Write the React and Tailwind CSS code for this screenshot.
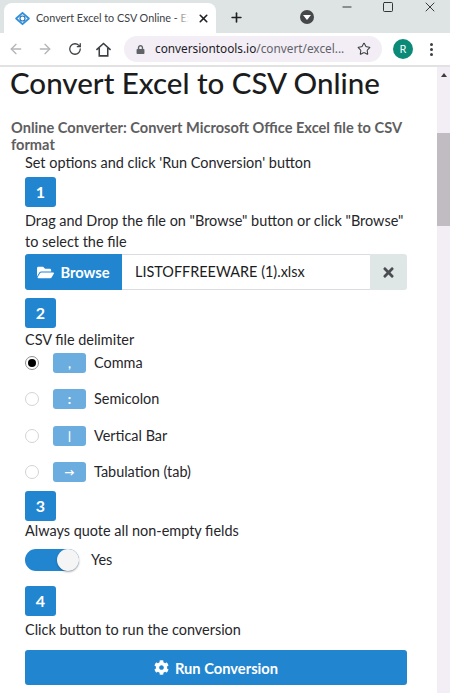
import { ArrowLeft, ArrowRight, RotateCw, Star, Plus, X, Minus, Square } from "lucide-react";
import { FaFolderOpen, FaTimes, FaCog, FaLock } from "react-icons/fa";

function StepBadge({ n, className = "" }) {
  return (
    <div className={`w-[31px] h-[30px] rounded-[3px] bg-[#2185d0] text-white font-bold text-[16px] flex items-center justify-center ${className}`}>
      {n}
    </div>
  );
}

function Delimiter({ glyph, label, checked, glyphClass = "text-[13px]" }) {
  return (
    <div className="h-[20px] flex items-center">
      <div className={`w-[14px] h-[14px] rounded-full border flex items-center justify-center bg-white ${checked ? "border-[#8f8f8f]" : "border-[#d4d4d5]"}`}>
        {checked && <div className="w-[8px] h-[8px] rounded-full bg-black" />}
      </div>
      <div className={`ml-[14px] w-[33px] h-[20px] rounded-[3px] bg-[#6cade0] text-white font-black leading-none flex items-center justify-center ${glyphClass}`}>
        {glyph}
      </div>
      <span className="ml-[8px] text-[14.45px] text-[#26262a]">{label}</span>
    </div>
  );
}

function BrowserBar() {
  return (
    <div className="font-['Noto_Sans',sans-serif]">
      {/* tab strip */}
      <div className="h-[33px] bg-[#dee3e3] flex pl-[4px]">
        <div className="w-[212px] mt-[3px] h-[30px] bg-white rounded-t-[8px] flex items-center pl-[10px]">
          <svg width="17" height="17" viewBox="0 0 24 24" fill="none">
            <path d="M3 12 L12 4 L21 12 L12 20 Z" stroke="#2f8fdc" strokeWidth="2.6" strokeLinejoin="round" />
            <circle cx="12" cy="12" r="3.6" stroke="#1f6fb5" strokeWidth="1.6" />
          </svg>
          <div className="relative ml-[5px] w-[153px] overflow-hidden whitespace-nowrap text-[10.8px] text-[#3c4043] font-['Lato',sans-serif]">
            Convert Excel to CSV Online - Excel
            <div className="absolute right-0 top-0 bottom-0 w-[14px] bg-gradient-to-r from-transparent to-white" />
          </div>
          <X size={13} strokeWidth={3} className="ml-[8px] text-[#202124]" />
        </div>
        <Plus size={15} strokeWidth={2.6} className="ml-[13px] mt-[10px] text-[#202124]" />
        <div className="ml-[56px] mt-[10px] w-[14px] h-[14px] rounded-full bg-[#45474a] flex items-center justify-center">
          <div className="w-0 h-0 border-l-[4px] border-r-[4px] border-t-[5px] border-l-transparent border-r-transparent border-t-white" />
        </div>
        <Minus size={14} strokeWidth={1.5} className="ml-[26px] text-[#202124]" />
        <Square size={12} strokeWidth={1.8} className="ml-[28px] mt-[1px] text-[#202124]" />
        <X size={16} strokeWidth={1.3} className="ml-[28px] mt-[-1px] text-[#202124]" />
      </div>
      {/* toolbar */}
      <div className="h-[32px] bg-white flex items-center pl-[8px]">
        <ArrowLeft size={16} strokeWidth={2} className="text-[#b3b5b8]" />
        <ArrowRight size={16} strokeWidth={2} className="ml-[13px] text-[#b3b5b8]" />
        <RotateCw size={14} strokeWidth={2.2} className="ml-[15px] text-[#3c4043]" />
        <svg width="17" height="17" viewBox="0 0 24 24" fill="none" stroke="#3c4043" strokeWidth="2.2" className="ml-[13px]">
          <path d="M2 12.5 L12 3.5 L22 12.5 M6 10 V21 H18 V10" strokeLinejoin="miter" />
        </svg>
        <div className="ml-[12px] w-[258px] h-[26px] rounded-full bg-[#f3edf6] flex items-center pl-[12px]">
          <FaLock size={9} className="text-[#5f6368]" />
          <span className="ml-[10px] text-[11.8px] text-[#202124] whitespace-nowrap">
            conversiontools.io<span className="text-[#5f6368]">/convert/excel...</span>
          </span>
          <Star size={14} strokeWidth={1.8} className="ml-[13px] text-[#3c4043]" />
        </div>
        <div className="ml-[11px] w-[20px] h-[20px] rounded-full bg-[#0b8a78] text-white text-[11px] flex items-center justify-center">R</div>
        <div className="ml-[17px] flex flex-col gap-[2px]">
          <div className="w-[3px] h-[3px] rounded-full bg-[#3c4043]" />
          <div className="w-[3px] h-[3px] rounded-full bg-[#3c4043]" />
          <div className="w-[3px] h-[3px] rounded-full bg-[#3c4043]" />
        </div>
      </div>
      <div className="h-[2px] bg-[#e2e2e2]" />
    </div>
  );
}

export default function App() {
  return (
    <div className="w-[450px] h-[693px] overflow-hidden bg-white flex flex-col">
      <BrowserBar />
      <div className="flex flex-1 min-h-0">
        <main className="w-[437px] font-['Lato',sans-serif] text-[#26262a] text-[14.45px] leading-[20px]">
          <h1 className="pl-[10px] -mt-[2px] text-[29.5px] leading-[36px] font-medium text-[#1b1c1d] whitespace-nowrap">
            Convert Excel to CSV Online
          </h1>
          <div className="pl-[11px] pr-[30px] mt-[18px]">
            <p className="font-bold text-[14.6px] text-[#5e5e60] leading-[17px]">
              Online Converter: Convert Microsoft Office Excel file to CSV format
            </p>
          </div>
          <div className="pl-[25px] pr-[30px]">
            <p>Set options and click 'Run Conversion' button</p>
            <StepBadge n="1" className="mt-[4px]" />
            <p className="mt-[3px] leading-[21px]">
              Drag and Drop the file on "Browse" button or click "Browse" to select the file
            </p>
            <div className="mt-[2px] h-[36px] flex">
              <div className="w-[97px] bg-[#2185d0] rounded-l-[3px] text-white font-bold text-[14.7px] flex items-center justify-center gap-[6px]">
                <FaFolderOpen size={17} />
                Browse
              </div>
              <div className="flex-1 border-y border-[#dcdce0] flex items-center pl-[13px] text-[#1b1c1d]">
                LISTOFFREEWARE (1).xlsx
              </div>
              <div className="w-[37px] bg-[#dee6e6] rounded-r-[3px] flex items-center justify-center">
                <FaTimes size={15} className="text-[#4b4e50]" />
              </div>
            </div>
            <StepBadge n="2" className="mt-[8px]" />
            <p className="mt-[2px]">CSV file delimiter</p>
            <div className="mt-[3px] flex flex-col gap-[16.4px]">
              <Delimiter glyph="," label="Comma" checked glyphClass="text-[11px]" />
              <Delimiter glyph=":" label="Semicolon" />
              <Delimiter glyph="|" label="Vertical Bar" glyphClass="text-[11px]" />
              <Delimiter glyph="→" label="Tabulation (tab)" glyphClass="text-[10px]" />
            </div>
            <StepBadge n="3" className="mt-[9px]" />
            <p>Always quote all non-empty fields</p>
            <div className="mt-[8px] flex items-center">
              <div className="w-[54px] h-[22px] rounded-full bg-[#2185d0] relative">
                <div className="absolute right-0 top-0 w-[22px] h-[22px] rounded-full bg-[#f5f5f6] shadow-[0_1px_2px_rgba(34,36,38,0.4)]" />
              </div>
              <span className="ml-[12px]">Yes</span>
            </div>
            <StepBadge n="4" className="mt-[15px]" />
            <p className="mt-[4px]">Click button to run the conversion</p>
            <div className="mt-[10px] h-[35px] rounded-[3px] bg-[#2185d0] text-white font-bold text-[14.7px] flex items-center justify-center gap-[6px]">
              <FaCog size={15} />
              Run Conversion
            </div>
          </div>
        </main>
        {/* page scrollbar */}
        <div className="w-[13px] bg-[#f3edf6] flex flex-col items-center">
          <div className="mt-[6px] w-0 h-0 border-l-[3px] border-r-[3px] border-b-[4px] border-l-transparent border-r-transparent border-b-[#3c3c3c]" />
          <div className="mt-[56px] w-full h-[93px] bg-[#c1bcc2]" />
        </div>
      </div>
    </div>
  );
}
